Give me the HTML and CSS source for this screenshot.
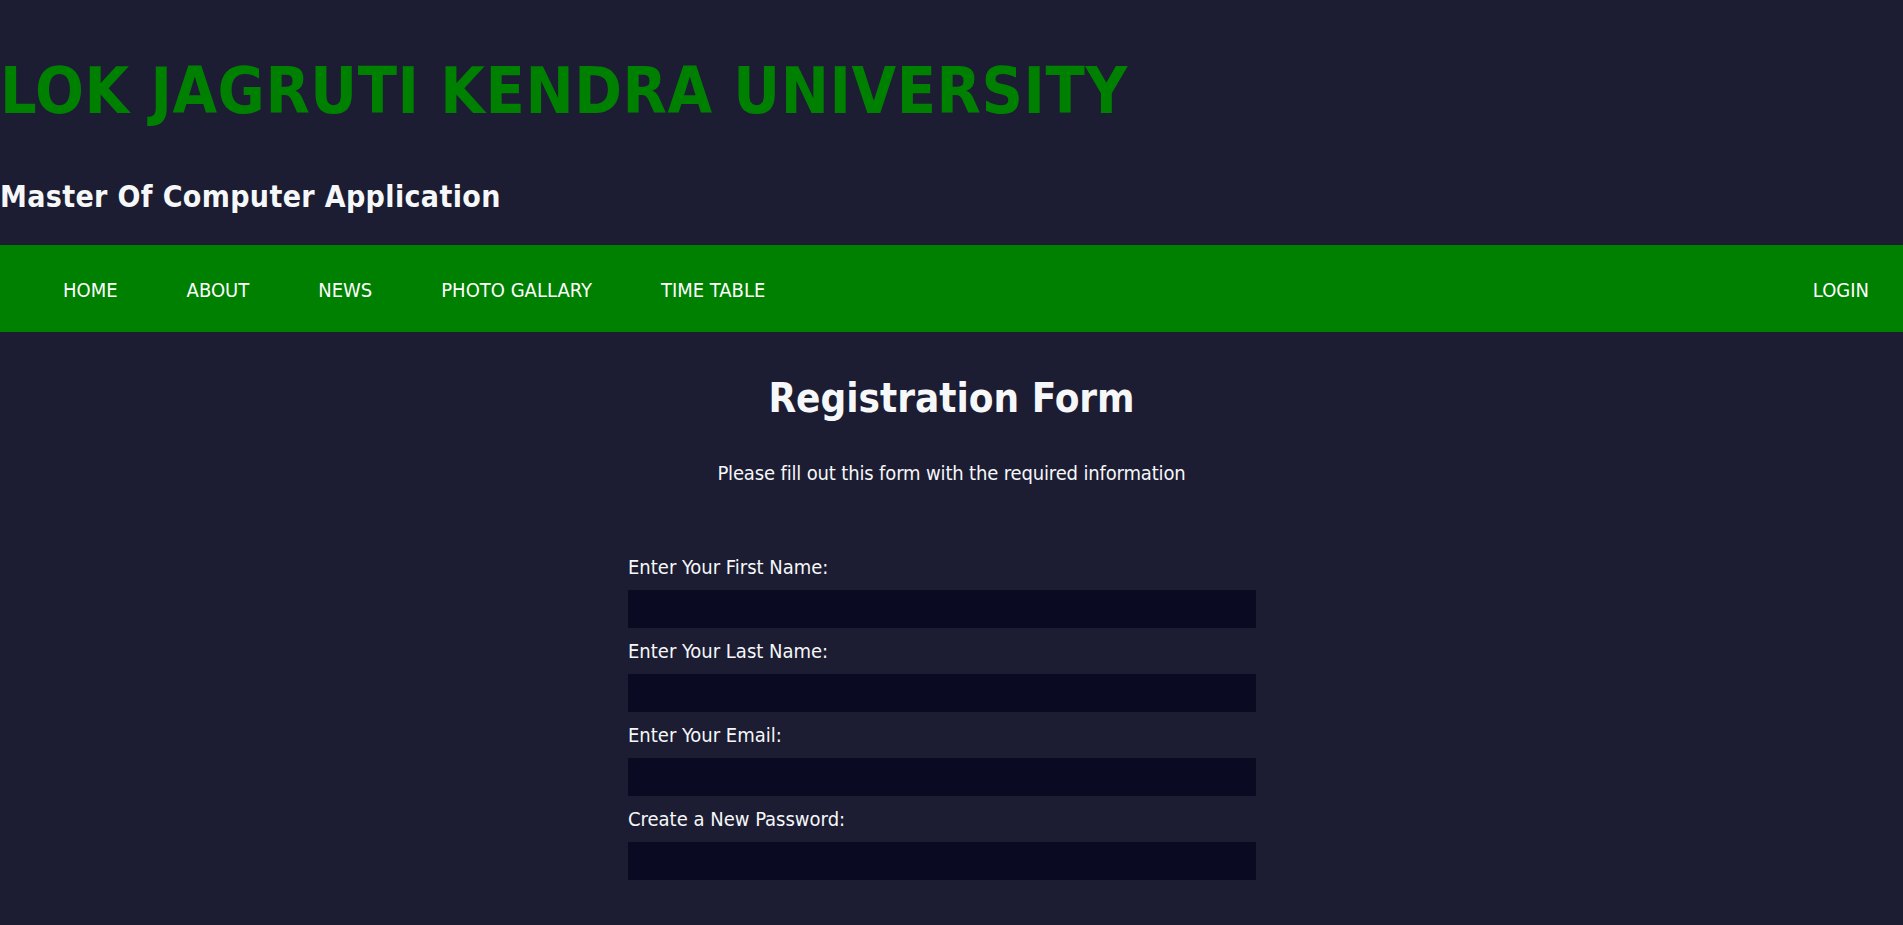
FILE: index.html
```html
<!DOCTYPE html>
<html lang="en">
<head>
<meta charset="utf-8">
<title>Registration Form</title>
<link rel="stylesheet" href="styles.css">
</head>
<body>
<header class="site-header">
  <h1 class="site-title">LOK JAGRUTI KENDRA UNIVERSITY</h1>
  <h2 class="site-subtitle">Master Of Computer Application</h2>
</header>
<nav class="main-nav">
  <ul class="nav-list">
    <li><a class="nav-link" href="#">HOME</a></li>
    <li><a class="nav-link" href="#">ABOUT</a></li>
    <li><a class="nav-link" href="#">NEWS</a></li>
    <li><a class="nav-link" href="#">PHOTO GALLARY</a></li>
    <li><a class="nav-link" href="#">TIME TABLE</a></li>
    <li class="nav-right"><a class="nav-link" href="#">LOGIN</a></li>
  </ul>
</nav>
<main class="content">
  <h2 class="form-title">Registration Form</h2>
  <p class="form-intro">Please fill out this form with the required information</p>
  <form class="reg-form">
    <label class="field-label" for="fname">Enter Your First Name:</label>
    <input class="field-input" id="fname" type="text">
    <label class="field-label" for="lname">Enter Your Last Name:</label>
    <input class="field-input" id="lname" type="text">
    <label class="field-label" for="email">Enter Your Email:</label>
    <input class="field-input" id="email" type="email">
    <label class="field-label" for="pass">Create a New Password:</label>
    <input class="field-input" id="pass" type="password">
  </form>
</main>
</body>
</html>
```

FILE: styles.css
```css
html, body {
  margin: 0;
  padding: 0;
}
body {
  background: #1c1d32;
  color: #f6f7f9;
  font-family: "DejaVu Sans", Verdana, sans-serif;
  font-stretch: condensed;
}
.site-header {
  padding-top: 53px;
}
.site-title {
  margin: 0;
  font-size: 64px;
  line-height: 76px;
  font-weight: bold;
  letter-spacing: 0.6px;
  color: #008000;
}
.site-subtitle {
  margin: 50px 0 0;
  font-size: 30px;
  line-height: 36px;
  font-weight: bold;
  letter-spacing: 0.35px;
  color: #f6f7f9;
}
.main-nav {
  margin-top: 30px;
  background: #008000;
  height: 87px;
}
.nav-list {
  list-style: none;
  margin: 0;
  padding: 0 34px 0 63px;
  display: flex;
  gap: 69px;
}
.nav-right {
  margin-left: auto;
}
.nav-link {
  display: block;
  padding-top: 33px;
  font-size: 20px;
  line-height: 24px;
  color: #ffffff;
  text-decoration: none;
}
.content {
  padding-top: 42px;
}
.form-title {
  margin: 0;
  text-align: center;
  font-size: 40px;
  line-height: 48px;
  font-weight: bold;
}
.form-intro {
  margin: 39px 0 0;
  text-align: center;
  font-size: 20px;
  line-height: 24px;
  letter-spacing: -0.15px;
}
.reg-form {
  margin: 70px 0 0 33%;
  width: 33%;
  display: flex;
  flex-direction: column;
}
.field-label {
  font-size: 20px;
  line-height: 24px;
  margin-bottom: 11px;
}
.field-input {
  box-sizing: border-box;
  width: 100%;
  height: 38px;
  margin: 0 0 11px;
  border: none;
  background: #0a0b23;
  color: #ffffff;
  padding: 0 10px;
  font: inherit;
}
```
